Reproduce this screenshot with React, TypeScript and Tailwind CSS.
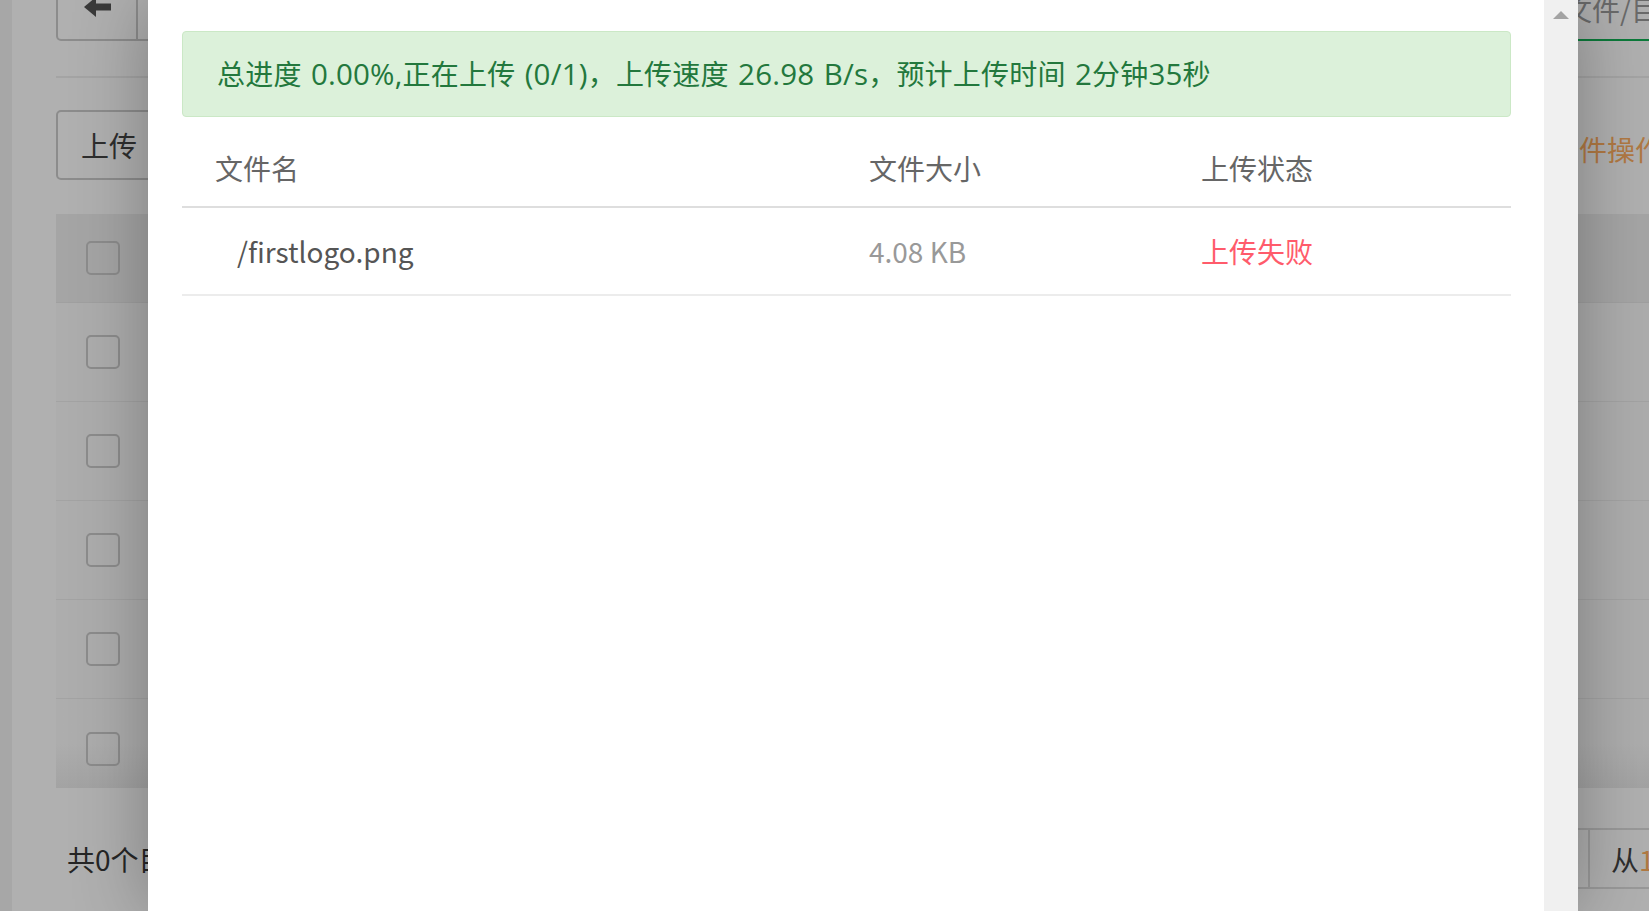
import React from "react";

const font = { fontFamily: '"Noto Sans CJK SC", "Noto Sans", sans-serif' };
const alertFont = { fontFamily: '"Open Sans", "Noto Sans CJK SC", sans-serif' };

function Checkbox() {
  return <div className="w-[34px] h-[34px] rounded-[5px] border-2 border-[#8c8c8c]" />;
}

function BackArrow() {
  return (
    <svg width="27" height="20" viewBox="0 0 27 20">
      <polygon points="0,10 12,0 12,20" fill="#3a3a3a" />
      <rect x="10" y="6.5" width="17" height="7" fill="#3a3a3a" />
    </svg>
  );
}

function L({ children }: { children: React.ReactNode }) {
  return <span className="text-[29.5px]">{children}</span>;
}

export default function App() {
  const rows = [0, 1, 2, 3];
  return (
    <div className="relative w-[1649px] h-[911px] overflow-hidden flex bg-[#a8a8a8]" style={font}>
      {/* Background page (under overlay) */}
      <div className="w-[12px] shrink-0 bg-[#a7a7a7]" />
      <div className="flex-1 bg-[#b0b0b0] pl-[44px] flex flex-col">
        <div className="w-[1700px] flex flex-col">
          {/* toolbar */}
          <div className="flex h-[61px] mt-[-20px] items-stretch">
            <div className="flex">
              <div className="w-[82px] border-2 border-[#8c8c8c] rounded-bl-[5px] flex items-end justify-center pb-[22px]">
                <BackArrow />
              </div>
              <div className="w-[100px] border-2 border-l-0 border-[#8c8c8c] rounded-br-[5px]" />
            </div>
            <div className="w-[1326px] shrink-0" />
            <div className="flex flex-col justify-end">
              <div className="border-b-2 border-[#0b7a3a] w-[200px] pb-[14px] text-[28px] leading-[32px] text-[#6a6a6a] whitespace-nowrap">
                文件/目录
              </div>
            </div>
          </div>
          <div className="h-[35px]" />
          <div className="border-b-2 border-[#a4a4a4]" />
          {/* row 2 */}
          <div className="flex items-center mt-[32px] h-[70px]">
            <div className="w-[130px] h-[70px] border-2 border-[#8c8c8c] rounded-[5px] flex items-center px-[23px] text-[28px] text-[#2e2e2e]">
              上传
            </div>
            <div className="w-[1365px] shrink-0" />
            <div className="text-[28px] text-[#b17943] whitespace-nowrap pt-[8px]">文件操作</div>
          </div>
          {/* table */}
          <div className="mt-[34px] flex flex-col">
            <div className="h-[89px] bg-[#a5a5a5] border-b border-[#a0a0a0] flex items-center pl-[30px]">
              <Checkbox />
            </div>
            {rows.map((r) => (
              <div key={r} className="h-[99px] border-b border-[#a3a3a3] flex items-center pl-[30px] bg-[#adadad]">
                <Checkbox />
              </div>
            ))}
            <div className="h-[89px] flex items-start pt-[33px] pl-[30px] bg-gradient-to-b from-[#adadad] via-[#adadad] to-[#a3a3a3]">
              <Checkbox />
            </div>
          </div>
          {/* footer */}
          <div className="flex items-start mt-[40px]">
            <div className="pl-[11px] h-[61px] flex items-center text-[28px] text-[#262626] whitespace-nowrap">共0个目录，0个文件</div>
            <div className="w-[1236px] shrink-0" />
            <div className="flex h-[61px] border-y-2 border-[#999999]">
              <div className="w-[32px] border-r-2 border-[#999999]" />
              <div className="pl-[21px] flex items-center text-[28px] text-[#2e2e2e] whitespace-nowrap">
                从<span className="text-[#b17943]">1</span>
              </div>
            </div>
          </div>
        </div>
      </div>

      {/* Modal */}
      <div className="absolute left-[148px] top-0 h-[911px] w-[1430px] flex shadow-[0_0_70px_rgba(0,0,0,0.3)]">
        <div className="flex-1 bg-white pt-[31px] pl-[34px] pr-[33px]">
          <div
            className="h-[86px] bg-[#dcf1da] border border-[#cbe8c6] rounded-[4px] flex items-center pl-[34px] text-[28px] text-[#23783d] whitespace-nowrap [word-spacing:1.5px] tracking-[0.2px]"
            style={alertFont}
          >
            <span>
              总进度<L> 0.00%,</L>正在上传<L> (0/1)</L>，上传速度<L> 26.98 B/s</L>，预计上传时间<L> 2</L>分钟<L>35</L>秒
            </span>
          </div>
          <div className="flex flex-col">
            <div className="h-[91px] pt-[13px] flex items-center border-b-2 border-[#dedede] text-[28px] text-[#666666]">
              <div className="w-[654px] pl-[33px]">文件名</div>
              <div className="w-[332px] pl-[33px]">文件大小</div>
              <div className="flex-1 pl-[33px]">上传状态</div>
            </div>
            <div className="h-[88px] flex items-center border-b-2 border-[#ececec] text-[28px]">
              <div className="w-[654px] pl-[55px] text-[#555555]">/firstlogo.png</div>
              <div className="w-[332px] pl-[33px] text-[#999999]">4.08 KB</div>
              <div className="flex-1 pl-[33px] text-[#ff5b6b]">上传失败</div>
            </div>
          </div>
        </div>
        <div className="w-[34px] bg-[#f0f0f0] flex justify-center pt-[11px]">
          <div className="w-0 h-0 border-l-[8px] border-r-[8px] border-b-[8px] border-l-transparent border-r-transparent border-b-[#a3a3a3]" />
        </div>
      </div>
    </div>
  );
}
